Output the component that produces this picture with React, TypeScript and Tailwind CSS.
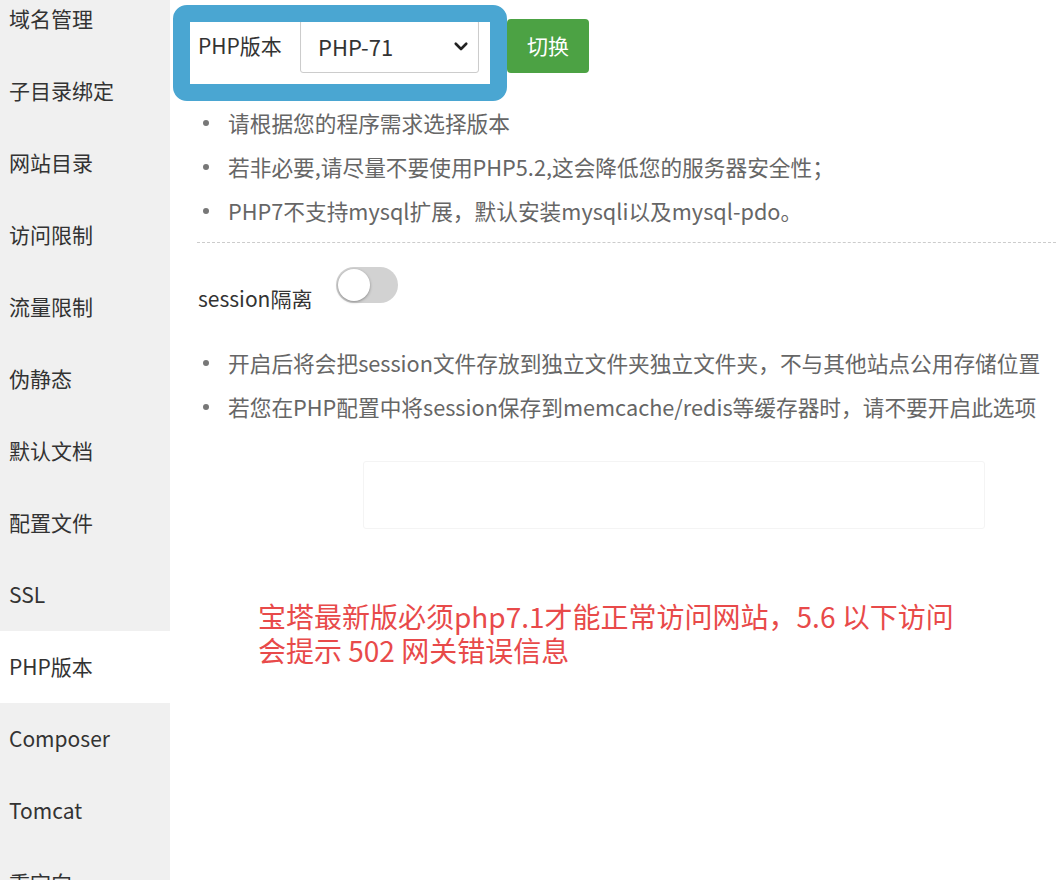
import { useState } from "react";

const menuItems = [
  "域名管理",
  "子目录绑定",
  "网站目录",
  "访问限制",
  "流量限制",
  "伪静态",
  "默认文档",
  "配置文件",
  "SSL",
  "PHP版本",
  "Composer",
  "Tomcat",
  "重定向",
];

const phpTips = [
  "请根据您的程序需求选择版本",
  "若非必要,请尽量不要使用PHP5.2,这会降低您的服务器安全性；",
  "PHP7不支持mysql扩展，默认安装mysqli以及mysql-pdo。",
];

const sessionTips = [
  "开启后将会把session文件存放到独立文件夹独立文件夹，不与其他站点公用存储位置",
  "若您在PHP配置中将session保存到memcache/redis等缓存器时，请不要开启此选项",
];

const TipList = ({ items }: { items: string[] }) => (
  <ul className="flex flex-col">
    {items.map((tip) => (
      <li key={tip} className="flex items-center h-[44px] text-[21.7px] text-[#666] whitespace-nowrap">
        <span className="w-[6px] h-[6px] rounded-full bg-[#777] ml-[5px] mr-[19px] flex-shrink-0"></span>
        <span>{tip}</span>
      </li>
    ))}
  </ul>
);

export default function App() {
  const [active] = useState("PHP版本");
  const [sessionOn, setSessionOn] = useState(false);

  return (
    <div
      className="flex w-[1056px] h-[880px] overflow-hidden bg-white relative"
      style={{ fontFamily: '"Microsoft YaHei", "Noto Sans CJK SC", sans-serif' }}
    >
      {/* side menu */}
      <div className="w-[170px] flex-shrink-0 bg-[#f0f0f0]">
        <div className="-mt-[17px] flex flex-col">
          {menuItems.map((item) => (
            <div
              key={item}
              className={`h-[72px] flex items-center pl-[9px] text-[21px] text-[#333] ${
                active === item ? "bg-white" : ""
              }`}
            >
              {item}
            </div>
          ))}
        </div>
      </div>

      {/* content */}
      <div className="flex-grow pl-[28px] pt-[19px] flex flex-col">
        <div className="flex items-center h-[54px]">
          <span className="text-[21px] text-[#333] w-[102px]">PHP版本</span>
          <div className="w-[179px] h-[54px] border border-[#ccc] rounded-[3px] flex items-center justify-between pl-[17px] pr-[8px] shadow-[inset_0_1px_1px_rgba(0,0,0,0.075)]">
            <span className="text-[22px] text-[#333]">PHP-71</span>
            <svg width="18" height="18" viewBox="0 0 24 24" fill="none" stroke="#222" strokeWidth="3.5" strokeLinecap="round" strokeLinejoin="round">
              <path d="M5 9l7 7 7-7" />
            </svg>
          </div>
          <button className="ml-[28px] w-[82px] h-[54px] rounded-[4px] bg-[#4ca244] text-white text-[21px]">
            切换
          </button>
        </div>

        <div className="mt-[28px]">
          <TipList items={phpTips} />
        </div>

        <div className="mt-[9px] border-t border-dashed border-[#ccc] -ml-[1px]"></div>

        <div className="mt-[24px] flex items-start">
          <span className="mt-[16px] leading-[30px] text-[21px] text-[#333]">session隔离</span>
          <button
            onClick={() => setSessionOn(!sessionOn)}
            className={`ml-[24px] w-[62px] h-[36px] rounded-full flex items-center px-[2px] ${
              sessionOn ? "bg-[#20a53a] justify-end" : "bg-[#d2d2d2] justify-start"
            }`}
          >
            <span className="w-[32px] h-[32px] rounded-full bg-white shadow-[0_1px_3px_rgba(0,0,0,0.35)]"></span>
          </button>
        </div>

        <div className="mt-[28px]">
          <TipList items={sessionTips} />
        </div>

        <div className="mt-[32px] ml-[165px] w-[622px] h-[68px] border border-[#f4f4f4] rounded-[3px]"></div>

        <div className="mt-[70px] ml-[60px] flex flex-col text-[28px] text-[#e84a4a]" style={{ fontFamily: '"Noto Sans CJK SC", sans-serif' }}>
          <p className="h-[34px] leading-[34px]">宝塔最新版必须php7.1才能正常访问网站，5.6 以下访问</p>
          <p className="h-[34px] leading-[34px]">会提示 502 网关错误信息</p>
        </div>
      </div>

      {/* annotation frame */}
      <div className="absolute left-[173px] top-[5px] w-[334px] h-[96px] border-[17px] border-[#4aa6d2] rounded-[14px] pointer-events-none"></div>
    </div>
  );
}
